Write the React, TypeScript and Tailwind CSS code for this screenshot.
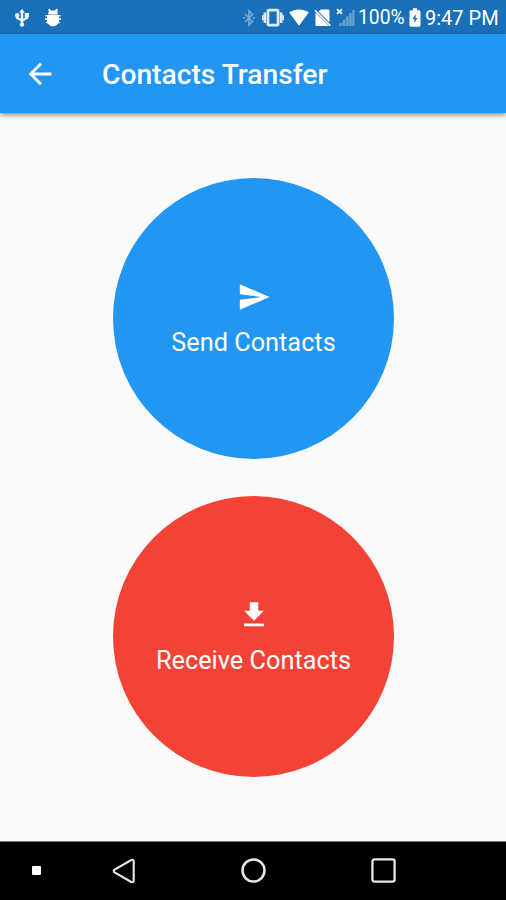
import type { ReactNode } from 'react';

function StatusBar() {
  return (
    <div className="flex h-[34px] shrink-0 items-start bg-[#1a70b8] text-white">
      <svg className="ml-[14px] mt-[8px] h-[20px] w-[16px]" viewBox="0 0 16 20" fill="none" stroke="#eef6ff">
        <path d="M8 3v14" strokeWidth="2.4" />
        <path d="M3 6.500v3.200l5 3M13 6.500v3.200l-5 3" strokeWidth="2.400" />
        <path d="M8 .8l2.800 4H5.200z" fill="#eef6ff" stroke="none" />
        <circle cx="3.200" cy="7.200" r="2.200" fill="#eef6ff" stroke="none" />
        <path d="M10.800 5h4.200v4.200h-4.200z" fill="#eef6ff" stroke="none" />
        <circle cx="8" cy="16.600" r="2.200" fill="#eef6ff" stroke="none" />
      </svg>
      <svg className="ml-[14px] mt-[8px] h-[20px] w-[18px]" viewBox="0 0 18 20" fill="#fff">
        <path d="M4.200 1.300l1.200-.5 1.600 1.700h4L12.600.8l1.200.5-.6 2.500.9 2.600H3.900l.9-2.600z" />
        <path d="M3 7.200h12v6C15 16 11.500 18 9 18.500 6.500 18 3 16 3 13.200z" />
        <path d="M1.500 7.800h15M1 11h16M2.200 14.500h13.600" stroke="#fff" strokeWidth="1.500" />
      </svg>
      <svg className="ml-[181px] mt-[9px] h-[18px] w-[12px]" viewBox="0 0 12 18" fill="none" stroke="#78aad4" strokeWidth="1.700">
        <path d="M2 5l7.500 7.500L6 16V2l3.500 3.500L2 13" />
        <path d="M1.200 8v2M10.800 8v2" />
      </svg>
      <svg className="ml-[6px] mt-[8px] h-[20px] w-[24px]" viewBox="0 0 24 20" fill="none" stroke="#deeaf8">
        <rect x="6.900" y="2.200" width="10.200" height="15" rx="1" strokeWidth="2.800" />
        <path d="M3.800 4.500v10.500M20.200 4.500v10.500" strokeWidth="2.400" />
        <path d="M1.900 7.300v4.900M22.100 7.300v4.900" strokeWidth="1.800" />
      </svg>
      <svg className="ml-[4px] mt-[9px] h-[17px] w-[20px]" viewBox="0 0 20 17" fill="#fff">
        <path d="M10 16.700L.2 3.600C3 1.500 6.300.4 10 .4s7 1.100 9.800 3.200z" />
      </svg>
      <svg className="ml-[5px] mt-[9px] h-[18px] w-[18px]" viewBox="0 0 18 18" fill="#fff">
        <path d="M6.800.5h7.400c.7 0 1.300.6 1.300 1.300v11.600L4.600 2.600z" />
        <path d="M1.500 3.500L15 17H2.800c-.7 0-1.300-.6-1.300-1.300z" />
        <path d="M1 1.200l15.500 15.500" stroke="#fff" strokeWidth="1.500" />
      </svg>
      <svg className="ml-[4px] mt-[8px] h-[19px] w-[19px]" viewBox="0 0 19 19" fill="none">
        <path d="M1 1.300l5 4.600M6 1.300L1 5.900" stroke="#e4effa" strokeWidth="1.900" />
        <path d="M4.500 15v3M8 12v6M11.200 8.500V18M14.400 5v13M17.400 2v16" stroke="#69a2d2" strokeWidth="2.100" />
        <path d="M2 18L18 2v16z" fill="#69a2d2" fillOpacity=".45" />
      </svg>
      <span className="ml-[3px] mt-[6px] w-[47px] whitespace-nowrap text-[19.300px] leading-[24px]">100%</span>
      <svg className="ml-[4px] mt-[8px] h-[19px] w-[12px]" viewBox="0 0 12 19">
        <path d="M4 .2h4v2h2c.9 0 1.500.6 1.500 1.500v13.600c0 .9-.6 1.500-1.500 1.500H2c-.9 0-1.500-.6-1.500-1.500V3.700c0-.9.6-1.500 1.500-1.500h2z" fill="#fff" />
        <path d="M6.600 6L3.500 11h2v3.800L8.600 10h-2z" fill="#1a70b8" />
      </svg>
      <span className="ml-[4px] mt-[6px] whitespace-nowrap text-[20px] leading-[24px]">9:47 PM</span>
    </div>
  );
}

function CircleButton({ color, label, children }: { color: string; label: string; children: ReactNode }) {
  return (
    <button className={`flex h-[281px] w-[281px] shrink-0 flex-col items-center rounded-full pt-[101.500px] pl-px text-white ${color}`}>
      <svg className="h-[34px] w-[34px]" viewBox="0 0 24 24" fill="currentColor">
        {children}
      </svg>
      <span className="mt-[14.500px] whitespace-nowrap text-[25.300px] leading-[30px]">{label}</span>
    </button>
  );
}

export default function App() {
  return (
    <div className="flex h-[900px] w-[506px] flex-col overflow-hidden bg-[#fafafa] font-['Roboto',sans-serif]">
      <StatusBar />
      <header className="flex h-[79px] shrink-0 items-center bg-[#2196f3] text-white shadow-[0_2px_5px_rgba(0,0,0,0.45)]">
        <svg className="ml-[23px] h-[34px] w-[34px]" viewBox="0 0 24 24" fill="currentColor">
          <path d="M20 11H7.830l5.590-5.590L12 4l-8 8 8 8 1.410-1.410L7.830 13H20v-2z" />
        </svg>
        <h1 className="ml-[45px] mt-[2px] whitespace-nowrap text-[28.200px] font-medium leading-[34px]">Contacts Transfer</h1>
      </header>
      <main className="flex flex-1 flex-col items-center gap-[37px] pt-[65px]">
        <CircleButton color="bg-[#2196f3]" label="Send Contacts">
          <path d="M2.010 21L23 12 2.010 3 2 10l15 2-15 2z" />
        </CircleButton>
        <CircleButton color="bg-[#f44336]" label="Receive Contacts">
          <path d="M19 9h-4V3H9v6H5l7 7 7-7zM5 18v2h14v-2H5z" />
        </CircleButton>
      </main>
      <nav className="flex h-[59px] shrink-0 items-center border-t border-[#777] bg-black pb-px text-[#e8e8e8]">
        <span className="ml-[32px] h-[9px] w-[9px] rounded-[1px] bg-white" />
        <svg className="ml-[70px] h-[28px] w-[26px]" viewBox="0 0 26 28" fill="none" stroke="currentColor" strokeWidth="2.100" strokeLinejoin="round">
          <path d="M3.600 12.600L20.300 3Q22.700 2.200 22.700 4.500V23.500Q22.700 25.800 20.300 25L3.600 15.400Q1.800 14 3.600 12.600Z" />
        </svg>
        <svg className="ml-[104px] h-[25px] w-[25px]" viewBox="0 0 25 25" fill="none" stroke="currentColor" strokeWidth="2.500">
          <circle cx="12.500" cy="12.500" r="11" />
        </svg>
        <svg className="ml-[105px] h-[25px] w-[25px]" viewBox="0 0 25 25" fill="none" stroke="currentColor" strokeWidth="2.300">
          <rect x="1.400" y="1.400" width="22.200" height="22.200" rx="2" />
        </svg>
      </nav>
    </div>
  );
}
